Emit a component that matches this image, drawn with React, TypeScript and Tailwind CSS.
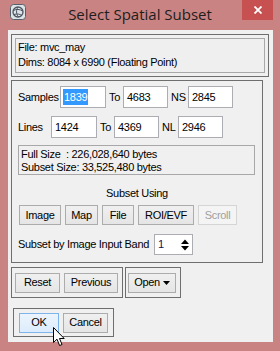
import React from 'react';

const btn =
  'h-[20px] flex items-center justify-center border border-[#acacac] bg-gradient-to-b from-[#f0f0f0] to-[#e5e5e5] text-black';

const Field: React.FC<{ value: string; w: string; selected?: boolean }> = ({ value, w, selected }) => (
  <div className={`${w} h-[22px] border border-[#abadb3] bg-white flex items-center pl-[2px]`}>
    {selected ? <span className="bg-[#3399ff] text-white px-[1px]">{value}</span> : <span className="px-[1px]">{value}</span>}
  </div>
);

const App: React.FC = () => {
  return (
    <div className="relative w-[280px] h-[351px] bg-[#c98382] flex flex-col overflow-hidden font-['Liberation_Sans',Arial,sans-serif] text-[11px] tracking-[-0.3px] text-black whitespace-nowrap">
      {/* title bar */}
      <div className="h-[30px] flex">
        <div className="w-[60px] pl-[10px] pt-[4px]">
          <svg width="16" height="16" viewBox="0 0 16 16">
            <rect x="0.5" y="0.5" width="15" height="15" rx="3" fill="#dfe3e6" stroke="#55606a" />
            <circle cx="8" cy="8" r="5" fill="none" stroke="#4a5560" strokeWidth="1.3" />
            <path d="M3.5 6.5 C6 5, 10 5, 12.5 7 M4 10.5 C7 9.5, 10 10, 12 11.5 M8 3 C6 6, 6 10, 8.5 13" fill="none" stroke="#4a5560" strokeWidth="1" />
          </svg>
        </div>
        <div className="flex-1 text-center pt-[4px] text-[15px] leading-[20px] tracking-normal text-[#1e1e1e] font-['Open_Sans',sans-serif]">
          Select Spatial Subset
        </div>
        <div className="w-[60px] flex justify-end pr-[7px]">
          <div className="w-[31px] h-[20px] bg-[#c75050] flex items-center justify-center">
            <svg width="8" height="8" viewBox="0 0 8 8">
              <path d="M0.5 0.5 L7.5 7.5 M7.5 0.5 L0.5 7.5" stroke="#fff" strokeWidth="1.8" />
            </svg>
          </div>
        </div>
      </div>

      {/* client area */}
      <div className="ml-[8px] mr-[7px] mb-[9px] flex-1 bg-[#f0f0f0] flex flex-col">
        {/* file info */}
        <div className="mt-[4px] ml-[3px] w-[258px] h-[43px] border border-[#6e6e6e] p-[3px]">
          <div className="h-full border border-[#a8a8a8] bg-[#efefef] pl-[2px] pt-[1px] leading-[15px]">
            <div>File: mvc_may</div>
            <div>Dims: 8084 x 6990 (Floating Point)</div>
          </div>
        </div>

        {/* subset panel */}
        <div className="mt-[3px] ml-[3px] w-[252px] h-[183px] border border-[#6e6e6e] pl-[6px] pt-[5px] flex flex-col">
          <div className="h-[22px] flex items-center">
            <span className="w-[42px]">Samples</span>
            <Field value="1839" w="w-[46px]" selected />
            <span className="w-[17px] pl-[3px]">To</span>
            <Field value="4683" w="w-[45px]" />
            <span className="w-[20px] pl-[3px]">NS</span>
            <Field value="2845" w="w-[45px]" />
          </div>
          <div className="mt-[8px] h-[22px] flex items-center">
            <span className="w-[33px]">Lines</span>
            <Field value="1424" w="w-[46px]" />
            <span className="w-[17px] pl-[3px]">To</span>
            <Field value="4369" w="w-[45px]" />
            <span className="w-[19px] pl-[3px]">NL</span>
            <Field value="2946" w="w-[45px]" />
          </div>
          <div className="mt-[7px] w-[237px] h-[30px] border border-[#a8a8a8] pl-[2px] pt-[2px] leading-[13px] whitespace-pre">
            <div>{'Full Size  : 226,028,640 bytes'}</div>
            <div>Subset Size: 33,525,480 bytes</div>
          </div>
          <div className="mt-[11px] leading-[14px] text-center pr-[6px]">Subset Using</div>
          <div className="mt-[5px] ml-[1px] flex gap-[4px]">
            <div className={`${btn} w-[42px]`}>Image</div>
            <div className={`${btn} w-[33px]`}>Map</div>
            <div className={`${btn} w-[32px]`}>File</div>
            <div className={`${btn} w-[56px]`}>ROI/EVF</div>
            <div className="h-[20px] w-[39px] flex items-center justify-center border border-[#d5d5d5] bg-[#f4f4f4] text-[#a0a0a0]">
              Scroll
            </div>
          </div>
          <div className="mt-[9px] flex items-center">
            <span className="w-[136px]">Subset by Image Input Band</span>
            <div className="w-[39px] h-[21px] border border-[#abadb3] bg-white flex items-center pl-[3px]">
              <span className="flex-1 text-[#101060]">1</span>
              <svg width="10" height="14" viewBox="0 0 10 14" className="mr-[2px]">
                <path d="M1 6 L5 1.5 L9 6 Z M1 8 L5 12.5 L9 8 Z" fill="#000" />
              </svg>
            </div>
          </div>
        </div>

        {/* reset / previous / open */}
        <div className="mt-[4px] flex">
          <div className="ml-[3px] w-[112px] h-[31px] border border-[#6e6e6e] pl-[3px] flex items-center gap-[4px]">
            <div className={`${btn} w-[45px]`}>Reset</div>
            <div className={`${btn} w-[54px]`}>Previous</div>
          </div>
          <div className="ml-[2px] w-[56px] h-[31px] border border-[#6e6e6e] pl-[2px] flex items-center">
            <div className={`${btn} w-[48px] gap-[3px]`}>
              Open
              <svg width="7" height="4" viewBox="0 0 7 4">
                <path d="M0 0 L7 0 L3.5 4 Z" fill="#000" />
              </svg>
            </div>
          </div>
        </div>

        {/* ok / cancel */}
        <div className="mt-[10px] ml-[5px] w-[101px] h-[29px] border border-[#6e6e6e] pl-[5px] flex items-center gap-[4px]">
          <div className="h-[20px] w-[40px] flex items-center justify-center border border-[#7eb4ea] bg-gradient-to-b from-[#ecf4fc] to-[#dcecfc]">
            OK
          </div>
          <div className={`${btn} w-[45px]`}>Cancel</div>
        </div>
      </div>

      {/* mouse pointer */}
      <svg className="absolute left-[53px] top-[327px]" width="13" height="20" viewBox="0 0 13 20">
        <path d="M0.5 0.5 L0.5 15.5 L4 12.2 L6.6 18.5 L9 17.5 L6.5 11.5 L11.2 11.5 Z" fill="#fff" stroke="#000" strokeWidth="1" strokeLinejoin="round" />
      </svg>
    </div>
  );
};

export default App;
